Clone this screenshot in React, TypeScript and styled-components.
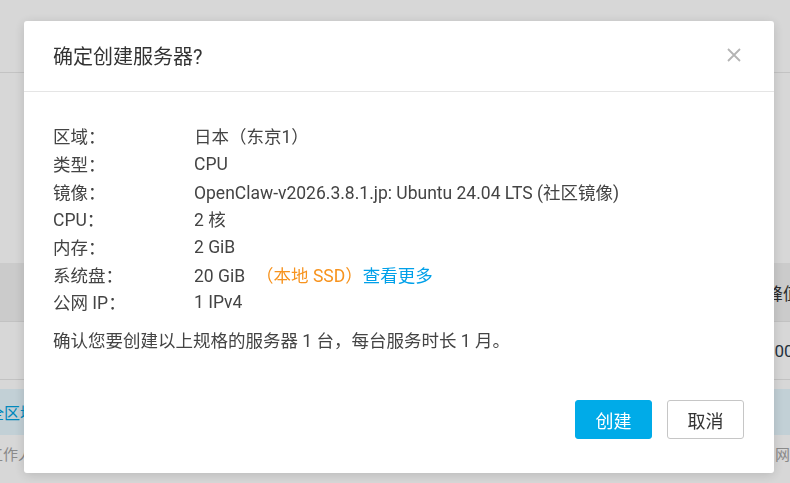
import styled, { createGlobalStyle } from 'styled-components';

const GlobalStyle = createGlobalStyle`
  html, body {
    margin: 0;
    padding: 0;
    width: 100%;
    height: 100%;
    overflow: hidden;
    background: #fff;
  }
  * {
    box-sizing: border-box;
  }
  body {
    font-family: Roboto, "Noto Sans CJK SC", sans-serif;
    color: #444;
  }
`;

interface SpecRow {
  label: string;
  value: string;
  extra?: boolean;
}

const specs: SpecRow[] = [
  { label: '区域：', value: '日本（东京1）' },
  { label: '类型：', value: 'CPU' },
  { label: '镜像：', value: 'OpenClaw-v2026.3.8.1.jp: Ubuntu 24.04 LTS (社区镜像)' },
  { label: 'CPU：', value: '2 核' },
  { label: '内存：', value: '2 GiB' },
  { label: '系统盘：', value: '20 GiB', extra: true },
  { label: '公网 IP：', value: '1 IPv4' },
];

function App() {
  return (
    <>
      <GlobalStyle />
      <Page>
        <TopBar />
        <TableWrap>
          <TableRow $head>
            <Cell />
            <EdgeCell>峰值带宽</EdgeCell>
          </TableRow>
          <TableRow>
            <Cell />
            <EdgeCell $dark>100 Mbps</EdgeCell>
          </TableRow>
        </TableWrap>
        <Notice>
          <NoticeText>全区域全部可用</NoticeText>
        </Notice>
        <FooterLine>
          <FooterText>工作人员</FooterText>
          <FooterText>网带宽</FooterText>
        </FooterLine>
      </Page>

      <Overlay />
      <Dialog>
        <DialogHeader>
          <Title>确定创建服务器?</Title>
          <CloseButton aria-label="关闭">
            <svg width="16" height="16" viewBox="0 0 16 16">
              <path d="M2 2 L14 14 M14 2 L2 14" stroke="#b4b4b4" strokeWidth="1.8" fill="none" />
            </svg>
          </CloseButton>
        </DialogHeader>
        <DialogBody>
          <SpecList>
            {specs.map((s) => (
              <SpecItem key={s.label}>
                <SpecLabel>{s.label}</SpecLabel>
                <SpecValue>
                  {s.value}
                  {s.extra && (
                    <>
                      <Disk>（本地 SSD）</Disk>
                      <MoreLink>查看更多</MoreLink>
                    </>
                  )}
                </SpecValue>
              </SpecItem>
            ))}
          </SpecList>
          <Confirm>确认您要创建以上规格的服务器 1 台，每台服务时长 1 月。</Confirm>
        </DialogBody>
        <DialogFooter>
          <Button $primary>创建</Button>
          <Button>取消</Button>
        </DialogFooter>
      </Dialog>
    </>
  );
}

const Page = styled.div`
  width: 100%;
  height: 100vh;
  display: flex;
  flex-direction: column;
  overflow: hidden;
`;

const TopBar = styled.div`
  height: 73px;
  border-bottom: 1px solid #e8e8e8;
  margin-bottom: 190px;
`;

const TableWrap = styled.div`
  display: flex;
  flex-direction: column;
  border-bottom: 1px solid #e6e6e6;
`;

const TableRow = styled.div<{ $head?: boolean }>`
  display: flex;
  height: 58px;
  align-items: center;
  background: ${(p) => (p.$head ? '#f1f1f1' : '#fff')};
  border-top: ${(p) => (p.$head ? 'none' : '1px solid #e6e6e6')};
`;

const Cell = styled.div`
  flex: 1;
`;

const EdgeCell = styled.div<{ $dark?: boolean }>`
  width: 18px;
  white-space: nowrap;
  font-size: 17px;
  color: ${(p) => (p.$dark ? '#2b3a4a' : '#333')};
  transform: translateX(${(p) => (p.$dark ? '-7px' : '-6px')});
`;

const Notice = styled.div`
  margin-top: 9px;
  height: 46px;
  background: #e6f7fe;
  display: flex;
  align-items: center;
`;

const NoticeText = styled.span`
  font-size: 16px;
  color: #00a2e0;
  margin-left: -12px;
`;

const FooterLine = styled.div`
  display: flex;
  justify-content: space-between;
  padding-top: 8px;
`;

const FooterText = styled.span`
  font-size: 15px;
  color: #a4a4a4;
  white-space: nowrap;
  &:first-child {
    margin-left: -12px;
  }
  &:last-child {
    margin-right: -30px;
  }
`;

const Overlay = styled.div`
  position: fixed;
  inset: 0;
  background: rgba(0, 0, 0, 0.157);
`;

const Dialog = styled.div`
  position: fixed;
  left: 24px;
  top: 21px;
  width: 750px;
  height: 452px;
  background: #fff;
  border-radius: 3px;
  box-shadow: 0 2px 12px rgba(0, 0, 0, 0.15);
  display: flex;
  flex-direction: column;
`;

const DialogHeader = styled.div`
  height: 71px;
  padding: 0 30px 0 29px;
  display: flex;
  align-items: center;
  justify-content: space-between;
  border-bottom: 1px solid #e5e5e5;
`;

const Title = styled.h2`
  margin: 0;
  font-size: 20px;
  font-weight: 400;
  color: #333;
  padding-bottom: 2px;
`;

const CloseButton = styled.button`
  border: none;
  background: none;
  padding: 0;
  width: 16px;
  height: 16px;
  cursor: pointer;
  display: flex;
  margin-right: 2px;
  margin-bottom: 2px;
`;

const DialogBody = styled.div`
  flex: 1;
  padding: 30px 29px 0;
`;

const SpecList = styled.div`
  display: flex;
  flex-direction: column;
`;

const SpecItem = styled.div`
  display: flex;
  height: 27.7px;
  align-items: center;
  font-size: 17.5px;
  color: #444;
`;

const SpecLabel = styled.span`
  width: 141px;
  flex-shrink: 0;
`;

const SpecValue = styled.span`
  white-space: nowrap;
`;

const Disk = styled.span`
  color: #f7931e;
  margin-left: 11px;
`;

const MoreLink = styled.a`
  color: #00a0e9;
  cursor: pointer;
`;

const Confirm = styled.p`
  margin: 12px 0 0;
  font-size: 17.5px;
  color: #444;
  line-height: 26px;
`;

const DialogFooter = styled.div`
  display: flex;
  justify-content: flex-end;
  gap: 15px;
  padding: 0 30px 34px;
`;

const Button = styled.button<{ $primary?: boolean }>`
  width: 77px;
  height: 39px;
  border-radius: 3px;
  font-family: inherit;
  font-size: 18px;
  cursor: pointer;
  border: 1px solid ${(p) => (p.$primary ? '#00abe8' : '#c6c6c6')};
  background: ${(p) => (p.$primary ? '#00abe8' : '#fff')};
  color: ${(p) => (p.$primary ? '#fff' : '#333')};
`;

export default App;
